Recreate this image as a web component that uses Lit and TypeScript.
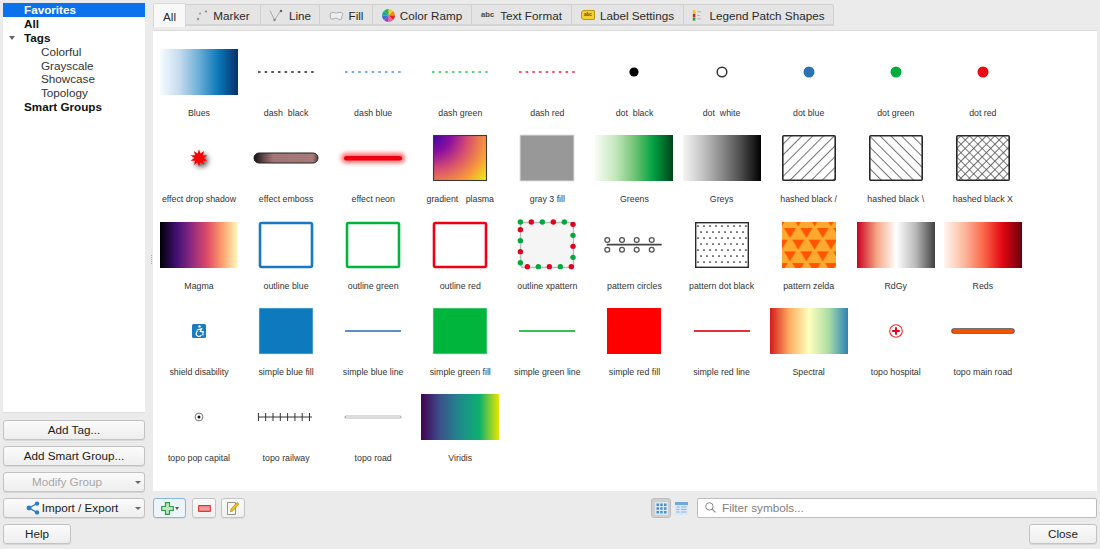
import { LitElement, html, css, svg } from "lit";
import { customElement } from "lit/decorators.js";

const ramp = (id: string, stops: string[]) => svg`<linearGradient id=${id}>${stops.map(
  (c, i) => svg`<stop offset=${i / (stops.length - 1)} stop-color=${c}></stop>`
)}</linearGradient>`;
const full = (id: string) => svg`<rect x="0" y="0" width="78" height="46" fill="url(#${id})"></rect>`;
const box = (fill: string, stroke = "none", sw = 0, rx = 0.5) =>
  svg`<rect x="12" y="0" width="54" height="46" rx=${rx} fill=${fill} stroke=${stroke} stroke-width=${sw}></rect>`;
const dash = (c: string) => svg`<line x1="11" x2="67" y1="23" y2="23" stroke=${c} stroke-width="1.7" stroke-dasharray="2.6 4.04"></line>`;
const dot = (c: string, r = 5.5) => svg`<circle cx="39" cy="23" r=${r} fill=${c}></circle>`;
const line = (c: string) => svg`<line x1="11" x2="67" y1="23" y2="23" stroke=${c} stroke-width="1.8"></line>`;
const outline = (c: string) => svg`<rect x="13" y="1" width="52" height="44" rx="1.5" fill="#fff" stroke=${c} stroke-width="2.6"></rect>`;
const hashed = (p: string) => svg`<rect x="12.8" y=".8" width="52.4" height="44.4" rx="1" fill="url(#${p})" stroke="#2a2a2a" stroke-width="1.6"></rect>`;

const starPts = (() => {
  const pts: string[] = [];
  for (let i = 0; i < 20; i++) {
    const r = i % 2 ? 4.8 : 8.8;
    const a = (i * Math.PI) / 10;
    pts.push(`${(39 + r * Math.sin(a)).toFixed(2)},${(23 - r * Math.cos(a)).toFixed(2)}`);
  }
  return pts.join(" ");
})();

const xDots: [number, number, number][] = [
  [91, 276, 0], [124, 276, 1], [157, 276, 0], [190, 276, 1], [223, 276, 0], [249, 283, 1],
  [249, 316, 0], [249, 349, 1], [249, 382, 0], [244, 410, 1], [211, 410, 0], [178, 410, 1],
  [145, 410, 0], [112, 410, 1], [91, 398, 0], [91, 365, 1], [91, 332, 0], [91, 299, 1],
];

const defs = svg`<defs>
  ${ramp("blues", ["#f7fbff", "#c6dbef", "#6baed6", "#0b77b8", "#08306b"])}
  ${ramp("greens", ["#f7fcf5", "#c7e9c0", "#74c476", "#00a040", "#00441b"])}
  ${ramp("greys", ["#f5f5f5", "#c4c4c4", "#8a8a8a", "#4a4a4a", "#000"])}
  ${ramp("magma", ["#000004", "#3b0f70", "#8c2981", "#de4968", "#fe9f6d", "#fcfdbf"])}
  ${ramp("rdgy", ["#ca0020", "#f4a582", "#ffffff", "#bababa", "#404040"])}
  ${ramp("reds", ["#fff5f0", "#fcbba1", "#fb6a4a", "#e30613", "#67000d"])}
  ${ramp("spectral", ["#d7191c", "#fdae61", "#ffffbf", "#abdda4", "#2b83ba"])}
  ${ramp("viridis", ["#440154", "#3b528b", "#1f8a8c", "#0cb070", "#e8e600"])}
  <linearGradient id="emboss"><stop offset="0" stop-color="#111"></stop><stop offset=".16" stop-color="#6a4a4a"></stop><stop offset=".3" stop-color="#a27676"></stop><stop offset=".92" stop-color="#a87a7a"></stop><stop offset="1" stop-color="#5a4444"></stop></linearGradient>
  <radialGradient id="plasma" gradientUnits="userSpaceOnUse" cx="12" cy="0" r="71">
    <stop offset="0" stop-color="#3f05a0"></stop><stop offset=".25" stop-color="#8b0fa0"></stop>
    <stop offset=".5" stop-color="#d8506e"></stop><stop offset=".76" stop-color="#f99a3a"></stop><stop offset=".97" stop-color="#e8f010"></stop>
  </radialGradient>
  <pattern id="hs" width="7.6" height="7.6" patternUnits="userSpaceOnUse" patternTransform="rotate(45)"><line x1="0" x2="0" y1="0" y2="8" stroke="#707070" stroke-width="2"></line></pattern>
  <pattern id="hb" width="7.6" height="7.6" patternUnits="userSpaceOnUse" patternTransform="rotate(-45)"><line x1="0" x2="0" y1="0" y2="8" stroke="#707070" stroke-width="2"></line></pattern>
  <pattern id="hx" width="6" height="6" patternUnits="userSpaceOnUse" patternTransform="rotate(45)"><path d="M0 0V6M0 0H6" stroke="#555" stroke-width="1.7" fill="none"></path></pattern>
  <pattern id="pd" width="6" height="12" x="14" y="3" patternUnits="userSpaceOnUse"><circle cx="1" cy="1" r=".85" fill="#111"></circle><circle cx="4" cy="7" r=".85" fill="#111"></circle></pattern>
  <pattern id="zelda" width="16.4" height="23.4" x="14" y="6" patternUnits="userSpaceOnUse">
    <path d="M0 0 H12 L6 10 Z M-8.2 11.7 H3.8 L-2.2 21.7 Z M8.2 11.7 H20.2 L14.2 21.7 Z" fill="#ff5500"></path>
  </pattern>
  <filter id="drop" x="-60%" y="-60%" width="220%" height="220%"><feDropShadow dx="2.4" dy="2.4" stdDeviation="2.4" flood-color="#000" flood-opacity=".7"></feDropShadow></filter>
  <filter id="glow" x="-20%" y="-200%" width="140%" height="500%"><feGaussianBlur stdDeviation="2.2"></feGaussianBlur></filter>
</defs>`;

const symbols: [string, unknown][] = [
  ["Blues", full("blues")],
  ["dash  black", dash("#222")],
  ["dash blue", dash("#4a94d8")],
  ["dash green", dash("#22c84a")],
  ["dash red", dash("#f0203c")],
  ["dot  black", dot("#000", 4.6)],
  ["dot  white", svg`<circle cx="39" cy="23" r="4.8" fill="#fff" stroke="#333" stroke-width="1.5"></circle>`],
  ["dot blue", dot("#2b72b5")],
  ["dot green", dot("#00ad3c")],
  ["dot red", dot("#ee0a14")],

  ["effect drop shadow", svg`<polygon points=${starPts} fill="#f00" filter="url(#drop)"></polygon>`],
  ["effect emboss", svg`<rect x="7" y="18" width="64" height="10" rx="5" fill="url(#emboss)" stroke="#222" stroke-width="1"></rect>`],
  ["effect neon", svg`<rect x="7" y="18" width="64" height="10" rx="5" fill="#ff7070" filter="url(#glow)"></rect><rect x="10" y="21" width="58" height="4.6" rx="2.3" fill="#ee0010"></rect>`],
  ["gradient   plasma", svg`<rect x="12.5" y=".5" width="53" height="45" fill="url(#plasma)" stroke="#3a3a3a" stroke-width="1.1"></rect>`],
  ["gray 3 fill", box("#989898", "#ddd", 1)],
  ["Greens", full("greens")],
  ["Greys", full("greys")],
  ["hashed black /", hashed("hs")],
  ["hashed black \\", hashed("hb")],
  ["hashed black X", hashed("hx")],

  ["Magma", full("magma")],
  ["outline blue", outline("#1a78c2")],
  ["outline green", outline("#00b53c")],
  ["outline red", outline("#f00010")],
  ["outline xpattern", svg`<rect x="12.5" y="0.5" width="53" height="45" rx="3" fill="#f5f5f5" stroke="#bbb" stroke-width="1.4"></rect>${xDots.map(
    ([x, y, r]) => svg`<circle cx=${x / 3 - 18} cy=${y / 3 - 92} r="2.7" fill=${r ? "#e4001b" : "#00a93c"}></circle>`
  )}`],
  ["pattern circles", svg`<line x1="11.7" x2="66.7" y1="22.7" y2="22.7" stroke="#444" stroke-width="1.8"></line>${[12.3, 27, 41.7, 56.7].map(
    (x) => svg`<circle cx=${x} cy="18" r="2.4" fill="#fff" stroke="#555" stroke-width="1.3"></circle><circle cx=${x} cy="27.7" r="2.4" fill="#fff" stroke="#555" stroke-width="1.3"></circle>`
  )}`],
  ["pattern dot black", svg`<rect x="12.7" y=".7" width="52.6" height="44.6" fill="url(#pd)" stroke="#2a2a2a" stroke-width="1.4"></rect>`],
  ["pattern zelda", svg`<rect x="12" y="0" width="54" height="46" fill="#ffa92e"></rect><rect x="12" y="0" width="54" height="46" fill="url(#zelda)"></rect>`],
  ["RdGy", full("rdgy")],
  ["Reds", full("reds")],

  ["shield disability", svg`<rect x="32" y="16" width="14" height="14" rx="1.5" fill="#1b7cc1"></rect><circle cx="39.5" cy="18.4" r="1.2" fill="#fff"></circle><path d="M36.6 22.2 L41.6 20.6 L40.4 23.4 L43.2 23.6 L42.8 27.4" fill="none" stroke="#fff" stroke-width="1.2"></path><path d="M37.6 23.2 A2.8 2.8 0 1 0 41.4 27" fill="none" stroke="#fff" stroke-width="1.2"></path>`],
  ["simple blue fill", box("#0d7abd", "#cfe2f0", 0.6)],
  ["simple blue line", line("#5a90c4")],
  ["simple green fill", box("#00b53c", "#cfeeda", 0.6)],
  ["simple green line", line("#35c24f")],
  ["simple red fill", box("#ff0000")],
  ["simple red line", line("#e8303c")],
  ["Spectral", full("spectral")],
  ["topo hospital", svg`<circle cx="39" cy="23" r="6.3" fill="#fff" stroke="#f22" stroke-width="1.1"></circle><path d="M39 19.2V26.8M35.2 23H42.8" stroke="#e8001c" stroke-width="1.9"></path>`],
  ["topo main road", svg`<line x1="10" x2="68" y1="23" y2="23" stroke="#444" stroke-width="5.4" stroke-linecap="round"></line><line x1="10" x2="68" y1="23" y2="23" stroke="#f55200" stroke-width="4" stroke-linecap="round"></line>`],

  ["topo pop capital", svg`<circle cx="39" cy="23" r="3.9" fill="#fff" stroke="#777" stroke-width="1"></circle><circle cx="39" cy="23" r="1.5" fill="#111"></circle>`],
  ["topo railway", svg`<line x1="11" x2="65" y1="23" y2="23" stroke="#333" stroke-width="1"></line>${[11, 18.3, 25.6, 32.9, 40.2, 47.5, 54.8, 62.1].map(
    (x) => svg`<line x1=${x + 0.4} x2=${x + 0.4} y1="19" y2="27" stroke="#333" stroke-width="1"></line>`
  )}`],
  ["topo road", svg`<line x1="12" x2="66" y1="23" y2="23" stroke="#b4b4b4" stroke-width="3.2" stroke-linecap="round"></line><line x1="12" x2="66" y1="23" y2="23" stroke="#ececec" stroke-width="1.4"></line>`],
  ["Viridis", full("viridis")],
];

const wheel = () => {
  const cols = ["#f0d020", "#f08a20", "#e82020", "#f060a0", "#a040b0", "#3070d0", "#20a0a0", "#30b040"];
  const c = 6.5;
  return html`<svg class="ti" width="13" height="13" viewBox="0 0 13 13">${cols.map((col, i) => {
    const a0 = (i * Math.PI) / 4, a1 = ((i + 1) * Math.PI) / 4;
    return svg`<path d="M${c} ${c}L${c + c * Math.sin(a0)} ${c - c * Math.cos(a0)}A${c} ${c} 0 0 1 ${c + c * Math.sin(a1)} ${c - c * Math.cos(a1)}Z" fill=${col}></path>`;
  })}</svg>`;
};

const tabs: [string, number, unknown][] = [
  ["All", 33, null],
  ["Marker", 75, html`<svg class="ti" width="12" height="12" viewBox="0 0 12 12"><circle cx="2" cy="9" r="1.3" fill="#999"></circle><circle cx="4" cy="3.6" r="1" fill="#999"></circle><circle cx="10" cy="1.6" r="1" fill="#777"></circle></svg>`],
  ["Line", 59, html`<svg class="ti" width="15" height="13" viewBox="0 0 15 13"><path d="M1 1.5L5.5 11L11 2.5" fill="none" stroke="#aaa" stroke-width="1"></path><circle cx="5.5" cy="11" r="1.2" fill="#888"></circle><circle cx="12" cy="2" r="1.3" fill="#666"></circle></svg>`],
  ["Fill", 53, html`<svg class="ti" width="15" height="10" viewBox="0 0 14 10"><path d="M1 2.4C3 .5 5.5 2 7 2S12 .4 13 2.2C13.8 4 12 5 12.2 6.8C12.4 9 10 9 8 7.6C6 6.4 4 8 2.4 8.2C.8 8.3.4 4 1 2.4Z" fill="#eee" stroke="#999" stroke-width=".8"></path></svg>`],
  ["Color Ramp", 99, wheel()],
  ["Text Format", 100, html`<span class="abc">abc</span>`],
  ["Label Settings", 112, html`<span class="lbl"><span>abc</span></span>`],
  ["Legend Patch Shapes", 150, html`<svg class="ti leg" width="10" height="13" viewBox="0 0 12 13"><rect x="1" y="0" width="3" height="4" fill="#f4c800"></rect><rect x="1" y="4.5" width="3" height="4" fill="#e02020"></rect><rect x="1" y="9" width="3" height="3.6" fill="#18a040"></rect><path d="M6 2H11M6 6.5H9.5M6 10.5H10.5" stroke="#aaa" stroke-width="1"></path></svg>`],
];

const tree: [string, string][] = [
  ["Favorites", "b sel"], ["All", "b"], ["Tags", "b open"], ["Colorful", "c"],
  ["Grayscale", "c"], ["Showcase", "c"], ["Topology", "c"], ["Smart Groups", "b"],
];

@customElement("app-root")
export class AppRoot extends LitElement {
  static styles = css`
    :host { display: block; width: 1100px; height: 549px; background: #ebebeb; overflow: hidden;
      font-family: "Liberation Sans", Arial, sans-serif; font-size: 11.7px; color: #222; }
    .root { display: grid; grid-template-columns: 142px 944px; column-gap: 8px; padding: 3px; height: 549px; box-sizing: border-box;
      grid-template-rows: 515px 20px; row-gap: 6px; position: relative; }
    .left { display: flex; flex-direction: column; gap: 6px; min-height: 0; }
    .tree { flex: 1; background: #fff; border-bottom: 1px solid #ddd; margin-bottom: 1px; }
    .row { height: 13.9px; line-height: 13.9px; font-size: 11.7px; position: relative; white-space: nowrap; }
    .row.b { font-weight: 700; padding-left: 21px; color: #111; }
    .row.c { padding-left: 38px; font-weight: 400; color: #333; }
    .row.sel { background: #0b72ec; color: #fff; }
    .row.open::before { content: ""; position: absolute; left: 6px; top: 5px; border: 3.5px solid transparent; border-top: 4px solid #666; border-bottom: 0; }
    .btn { height: 20px; box-sizing: border-box; border: 1px solid #c2c2c2; border-radius: 3px; padding-bottom: 1px;
      background: linear-gradient(#fbfbfb, #eeeeee); display: flex; align-items: center; justify-content: center;
      font-size: 11.7px; color: #1c1c1c; position: relative; gap: 2px; box-shadow: 0 1px 0 #d8d8d8; }
    .btn.dis { color: #a8a8a8; }
    .btn.menu::after { content: ""; position: absolute; right: 3px; top: 8px; border: 3px solid transparent; border-top: 3px solid #666; border-bottom: 0; }
    .btn.shift { padding-right: 14px; }
    .btn.imp { padding-right: 4px; }
    .right { display: flex; flex-direction: column; min-height: 0; }
    .tabs { display: flex; height: 23px; flex: none; box-sizing: border-box; align-items: flex-end; }
    .tab { box-sizing: border-box; height: 22px; padding-top: 2px; background: #e4e4e4; border: 1px solid #d0d0d0; border-left: 0; border-bottom: 2px solid #d4d4d4;
      display: flex; align-items: center; justify-content: center; gap: 5px; font-size: 11.7px; color: #2a2a2a; }
    .tab.on { background: #f8f8f8; border: 1px solid #d6d6d6; border-bottom: 0; border-radius: 2px 2px 0 0; height: 24px; margin-bottom: -1px; padding-top: 1px; z-index: 1; }
    .tab:last-child { border-radius: 0 3px 0 0; }
    .ti { flex: none; display: block; }
    .leg { margin-right: 2px; }
    .abc { font-size: 7.6px; font-weight: 700; color: #444; margin-top: -3px; margin-right: 1px; }
    .lbl { width: 12px; height: 8px; background: #f4cf2e; border: 1px solid #b89a10; border-radius: 3px 1px 1px 3px; display: flex; align-items: center; justify-content: center; margin-top: -2px; }
    .lbl span { font-size: 4.5px; font-weight: 700; color: #5a4a00; }
    .pane { margin-top: 4px; height: 461px; background: #fff; border-top: 1px solid #dcdcdc; box-sizing: border-box; flex: none;
      display: grid; grid-template-columns: repeat(10, 87.1px); grid-auto-rows: 86.3px; padding: 18px 0 0 2.45px; align-content: start; }
    .cell { display: flex; flex-direction: column; align-items: center; min-width: 0; }
    .sym { display: block; width: 78px; height: 46px; overflow: visible; flex: none; }
    .name { margin-top: 12px; font-size: 8.8px; line-height: 12px; white-space: pre; color: #333; }
    .tools { margin-top: 7px; height: 20px; display: flex; align-items: center; }
    .tb { height: 20px; box-sizing: border-box; border: 1px solid #c4c4c4; border-radius: 3px; background: linear-gradient(#f9f9f9, #f0f0f0);
      display: flex; align-items: center; justify-content: center; box-shadow: 0 1px 0 #dcdcdc; }
    .tb.add { width: 33px; border-color: #83b5e8; background: #eef4fb; gap: 1px; margin-right: 6px; }
    .tb.add::after { content: ""; border: 2.5px solid transparent; border-top: 3px solid #555; border-bottom: 0; }
    .tb.sq { width: 24px; margin-right: 5px; }
    .spacer { flex: 1; }
    .view { width: 20px; height: 20px; box-sizing: border-box; display: flex; align-items: center; justify-content: center; }
    .view.on { background: #cfcfcf; border: 1px solid #bdbdbd; border-radius: 3px; }
    .list { margin-right: 6px; }
    .filter { width: 400px; height: 20px; box-sizing: border-box; border: 1px solid #bcbcbc; border-radius: 2px; background: #fff; padding-bottom: 1px;
      display: flex; align-items: center; gap: 6px; padding-left: 7px; color: #808080; font-size: 11.7px; }
    .bottom { grid-column: 1 / -1; display: flex; justify-content: space-between; }
    .help { width: 68px; }
    .close { width: 68px; }
    .grip { position: absolute; left: 151px; top: 255px; display: flex; flex-direction: column; gap: 1px; }
    .grip i { display: block; width: 1px; height: 1px; background: #aaa; }
  `;

  render() {
    return html`<div class="root">
      <div class="left">
        <div class="tree">${tree.map(([t, c]) => html`<div class="row ${c}">${t}</div>`)}</div>
        <div class="btn">Add Tag...</div>
        <div class="btn">Add Smart Group...</div>
        <div class="btn dis menu shift">Modify Group</div>
        <div class="btn menu imp">
          <svg width="14" height="14" viewBox="0 0 14 14"><path d="M3 7L11 2.5M3 7L11 11.5" stroke="#2b7cc4" stroke-width="1.4"></path><circle cx="3" cy="7" r="2.4" fill="#2b7cc4"></circle><circle cx="11" cy="2.6" r="2.2" fill="#2b7cc4"></circle><circle cx="11" cy="11.4" r="2.2" fill="#2b7cc4"></circle></svg>
          Import / Export
        </div>
      </div>
      <div class="right">
        <div class="tabs">${tabs.map(([t, w, ic], i) => html`<div class="tab ${i === 0 ? "on" : ""}" style="width:${w}px">${ic}<span>${t}</span></div>`)}</div>
        <div class="pane">
          <svg width="0" height="0" style="position:absolute">${defs}</svg>
          ${symbols.map(([n, s]) => html`<div class="cell"><svg class="sym" viewBox="0 0 78 46">${s}</svg><div class="name">${n}</div></div>`)}
        </div>
        <div class="tools">
          <div class="tb add"><svg width="13" height="13" viewBox="0 0 13 13"><path d="M4.5 .7H8.5V4.5H12.3V8.5H8.5V12.3H4.5V8.5H.7V4.5H4.5Z" fill="#bfe8c0" stroke="#2f9a4a" stroke-width="1.2"></path></svg></div>
          <div class="tb sq"><svg width="13" height="7" viewBox="0 0 13 7"><rect x=".6" y=".6" width="11.8" height="5.8" rx=".5" fill="#f59a9a" stroke="#d83a3a" stroke-width="1.1"></rect></svg></div>
          <div class="tb sq"><svg width="14" height="15" viewBox="0 0 14 15"><path d="M1.5 1.5H9.5V13.5H1.5Z" fill="#fbfbf2" stroke="#888" stroke-width=".9"></path><path d="M4.5 10.8L5 8L11 1.4L12.9 3L7 9.8Z" fill="#f0c020" stroke="#a07a00" stroke-width=".6"></path></svg></div>
          <div class="spacer"></div>
          <div class="view on"><svg width="13" height="13" viewBox="0 0 13 13"><rect width="13" height="13" fill="#dbe9f7"></rect><path d="M1.5 1.5h2.5v2.5h-2.5zM5.2 1.5h2.5v2.5h-2.5zM9 1.5h2.5v2.5h-2.5zM1.5 5.2h2.5v2.5h-2.5zM5.2 5.2h2.5v2.5h-2.5zM9 5.2h2.5v2.5h-2.5zM1.5 9h2.5v2.5h-2.5zM5.2 9h2.5v2.5h-2.5zM9 9h2.5v2.5h-2.5z" fill="#4a8fd0"></path></svg></div>
          <div class="view list"><svg width="13" height="13" viewBox="0 0 13 13"><rect width="13" height="13" fill="#d8e8f6"></rect><rect width="13" height="3" fill="#6fa8dc"></rect><path d="M1.5 5H4.5M6 5H11.5M1.5 7.5H4.5M6 7.5H11.5M1.5 10H4.5M6 10H11.5" stroke="#8ab6e0" stroke-width="1"></path></svg></div>
          <div class="filter"><svg width="11" height="11" viewBox="0 0 11 11"><circle cx="4.4" cy="4.4" r="3.7" fill="none" stroke="#888" stroke-width="1"></circle><path d="M7.2 7.2L10.4 10.4" stroke="#888" stroke-width="1.1"></path></svg><span>Filter symbols...</span></div>
        </div>
      </div>
      <div class="bottom"><div class="btn help">Help</div><div class="btn close">Close</div></div>
      <div class="grip"><i></i><i></i><i></i><i></i><i></i></div>
    </div>`;
  }
}
